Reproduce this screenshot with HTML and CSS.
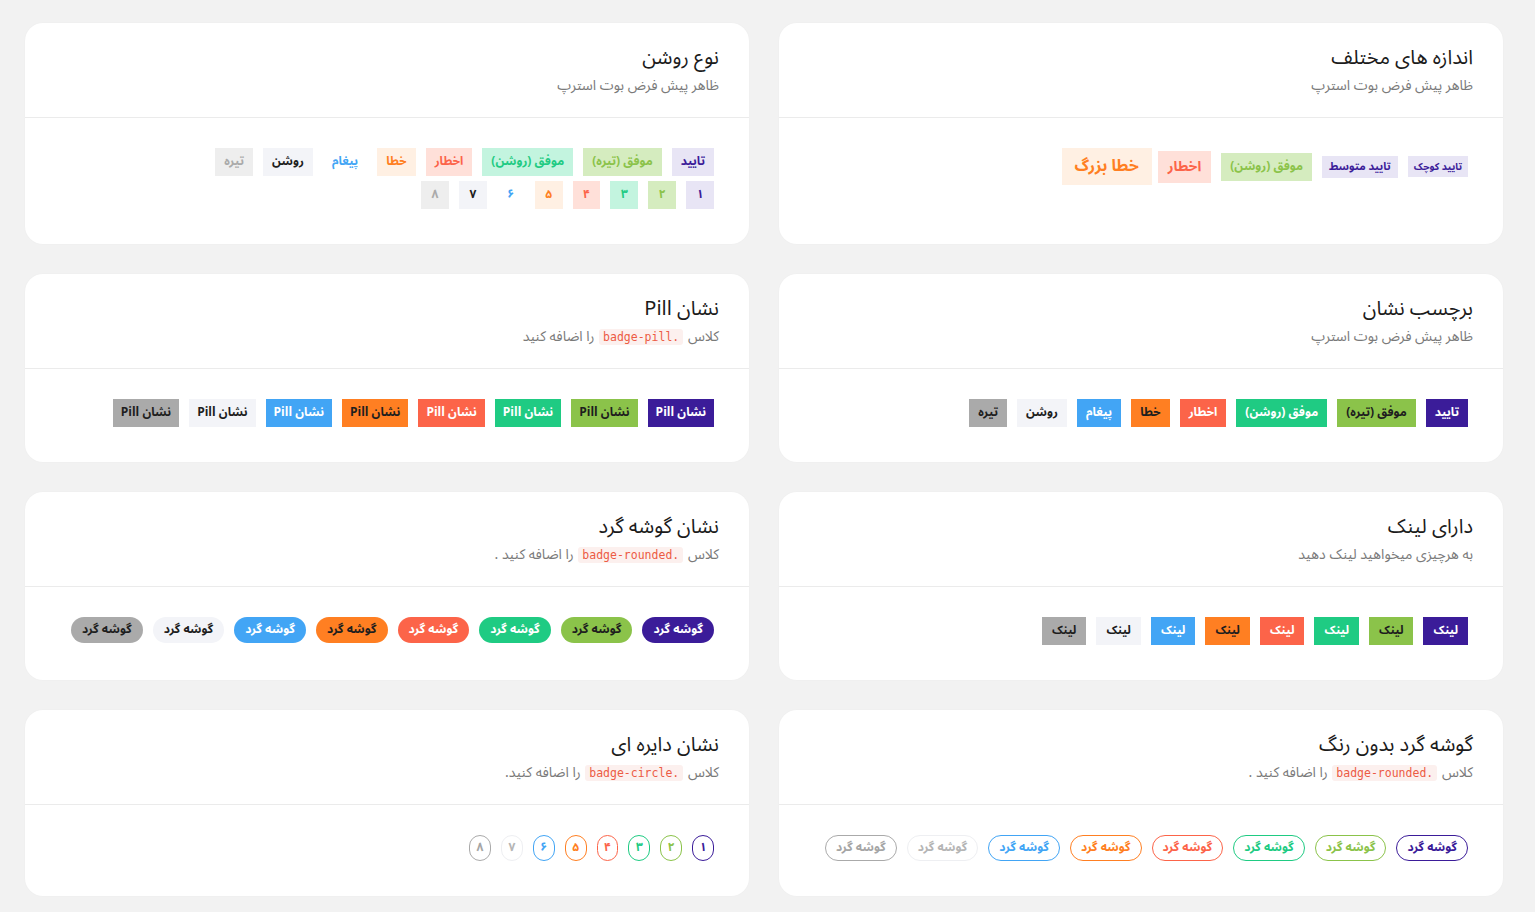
FILE: index.html
```html
<!DOCTYPE html>
<html lang="fa" dir="rtl">
<head>
<meta charset="utf-8">
<title>نشان ها</title>
<link rel="stylesheet" href="styles.css">
</head>
<body>
<main class="page">

  <section class="card">
    <header class="card-head">
      <h4 class="card-title">اندازه های مختلف</h4>
      <p class="card-sub">ظاهر پیش فرض بوت استرپ</p>
    </header>
    <div class="card-body">
      <div class="badge-row align-center">
        <span class="badge badge-sm light-primary">تایید کوچک</span>
        <span class="badge badge-md light-primary">تایید متوسط</span>
        <span class="badge light-success-dark">موفق (روشن)</span>
        <span class="badge badge-lg light-danger">اخطار</span>
        <span class="badge badge-xl light-warning">خطا بزرگ</span>
      </div>
    </div>
  </section>

  <section class="card">
    <header class="card-head">
      <h4 class="card-title">نوع روشن</h4>
      <p class="card-sub">ظاهر پیش فرض بوت استرپ</p>
    </header>
    <div class="card-body">
      <div class="badge-row">
        <span class="badge light-primary">تایید</span>
        <span class="badge light-success-dark">موفق (تیره)</span>
        <span class="badge light-success">موفق (روشن)</span>
        <span class="badge light-danger">اخطار</span>
        <span class="badge light-warning">خطا</span>
        <span class="badge light-info">پیغام</span>
        <span class="badge light-light">روشن</span>
        <span class="badge light-dark">تیره</span>
      </div>
      <div class="badge-row">
        <span class="badge badge-num light-primary">۱</span>
        <span class="badge badge-num light-success-dark">۲</span>
        <span class="badge badge-num light-success">۳</span>
        <span class="badge badge-num light-danger">۴</span>
        <span class="badge badge-num light-warning">۵</span>
        <span class="badge badge-num light-info">۶</span>
        <span class="badge badge-num light-light">۷</span>
        <span class="badge badge-num light-dark">۸</span>
      </div>
    </div>
  </section>

  <section class="card">
    <header class="card-head">
      <h4 class="card-title">برچسب نشان</h4>
      <p class="card-sub">ظاهر پیش فرض بوت استرپ</p>
    </header>
    <div class="card-body">
      <div class="badge-row">
        <span class="badge bg-primary">تایید</span>
        <span class="badge bg-success-dark">موفق (تیره)</span>
        <span class="badge bg-success">موفق (روشن)</span>
        <span class="badge bg-danger">اخطار</span>
        <span class="badge bg-warning">خطا</span>
        <span class="badge bg-info">پیغام</span>
        <span class="badge bg-light">روشن</span>
        <span class="badge bg-dark">تیره</span>
      </div>
    </div>
  </section>

  <section class="card">
    <header class="card-head">
      <h4 class="card-title">نشان Pill</h4>
      <p class="card-sub">کلاس <code class="code">.badge-pill</code> را اضافه کنید</p>
    </header>
    <div class="card-body">
      <div class="badge-row">
        <span class="badge badge-pill bg-primary">نشان Pill</span>
        <span class="badge badge-pill bg-success-dark">نشان Pill</span>
        <span class="badge badge-pill bg-success">نشان Pill</span>
        <span class="badge badge-pill bg-danger">نشان Pill</span>
        <span class="badge badge-pill bg-warning">نشان Pill</span>
        <span class="badge badge-pill bg-info">نشان Pill</span>
        <span class="badge badge-pill bg-light">نشان Pill</span>
        <span class="badge badge-pill bg-dark">نشان Pill</span>
      </div>
    </div>
  </section>

  <section class="card">
    <header class="card-head">
      <h4 class="card-title">دارای لینک</h4>
      <p class="card-sub">به هرچیزی میخواهید لینک دهید</p>
    </header>
    <div class="card-body">
      <div class="badge-row">
        <a class="badge badge-link bg-primary" href="#">لینک</a>
        <a class="badge badge-link bg-success-dark" href="#">لینک</a>
        <a class="badge badge-link bg-success" href="#">لینک</a>
        <a class="badge badge-link bg-danger" href="#">لینک</a>
        <a class="badge badge-link bg-warning" href="#">لینک</a>
        <a class="badge badge-link bg-info" href="#">لینک</a>
        <a class="badge badge-link bg-light" href="#">لینک</a>
        <a class="badge badge-link bg-dark" href="#">لینک</a>
      </div>
    </div>
  </section>

  <section class="card">
    <header class="card-head">
      <h4 class="card-title">نشان گوشه گرد</h4>
      <p class="card-sub">کلاس <code class="code">.badge-rounded</code> را اضافه کنید .</p>
    </header>
    <div class="card-body">
      <div class="badge-row">
        <span class="badge badge-rounded bg-primary">گوشه گرد</span>
        <span class="badge badge-rounded bg-success-dark">گوشه گرد</span>
        <span class="badge badge-rounded bg-success">گوشه گرد</span>
        <span class="badge badge-rounded bg-danger">گوشه گرد</span>
        <span class="badge badge-rounded bg-warning">گوشه گرد</span>
        <span class="badge badge-rounded bg-info">گوشه گرد</span>
        <span class="badge badge-rounded bg-light">گوشه گرد</span>
        <span class="badge badge-rounded bg-dark">گوشه گرد</span>
      </div>
    </div>
  </section>

  <section class="card">
    <header class="card-head">
      <h4 class="card-title">گوشه گرد بدون رنگ</h4>
      <p class="card-sub">کلاس <code class="code">.badge-rounded</code> را اضافه کنید .</p>
    </header>
    <div class="card-body">
      <div class="badge-row">
        <span class="badge badge-outline out-primary">گوشه گرد</span>
        <span class="badge badge-outline out-success-dark">گوشه گرد</span>
        <span class="badge badge-outline out-success">گوشه گرد</span>
        <span class="badge badge-outline out-danger">گوشه گرد</span>
        <span class="badge badge-outline out-warning">گوشه گرد</span>
        <span class="badge badge-outline out-info">گوشه گرد</span>
        <span class="badge badge-outline out-light">گوشه گرد</span>
        <span class="badge badge-outline out-dark">گوشه گرد</span>
      </div>
    </div>
  </section>

  <section class="card">
    <header class="card-head">
      <h4 class="card-title">نشان دایره ای</h4>
      <p class="card-sub">کلاس <code class="code">.badge-circle</code> را اضافه کنید.</p>
    </header>
    <div class="card-body">
      <div class="badge-row">
        <span class="badge badge-circle out-primary">۱</span>
        <span class="badge badge-circle out-success-dark">۲</span>
        <span class="badge badge-circle out-success">۳</span>
        <span class="badge badge-circle out-danger">۴</span>
        <span class="badge badge-circle out-warning">۵</span>
        <span class="badge badge-circle out-info">۶</span>
        <span class="badge badge-circle out-light">۷</span>
        <span class="badge badge-circle out-dark">۸</span>
      </div>
    </div>
  </section>

</main>
</body>
</html>
```

FILE: styles.css
```css
* { box-sizing: border-box; }

html, body {
  margin: 0;
  padding: 0;
  background: #f2f2f2;
}

body {
  direction: rtl;
  font-family: "Noto Sans Arabic", Roboto, "DejaVu Sans", sans-serif;
  color: #222;
}

.page {
  display: grid;
  grid-template-columns: 724px 724px;
  column-gap: 30px;
  row-gap: 30px;
  padding: 23px 32px 8px 25px;
}

.card {
  background: #fff;
  border-radius: 18px;
  box-shadow: 0 0 2px rgba(0, 0, 0, 0.03);
  display: flex;
  flex-direction: column;
}

.card-head {
  padding: 23px 30px 21px;
  border-bottom: 1px solid #ebebeb;
}

.card-title {
  margin: 0;
  font-size: 20px;
  line-height: 24px;
  font-weight: 400;
  color: #1b1b1b;
}

.card-sub {
  margin: 6px 0 0;
  font-size: 14px;
  line-height: 20px;
  color: #7a7a7a;
}

.code {
  font-family: "DejaVu Sans Mono", "Liberation Mono", monospace;
  font-size: 11.5px;
  line-height: 14px;
  color: #ec5b44;
  background: #fcf0ee;
  padding: 1px 4px;
  margin: 0 1px;
  border-radius: 3px;
}

.card-body {
  padding: 30px 35px 35px 30px;
  flex: 1;
}

.badge-row {
  display: flex;
  flex-wrap: wrap;
  gap: 10px;
}

.badge-row + .badge-row { margin-top: 5px; }

.align-center { align-items: center; }

.badge {
  display: inline-flex;
  align-items: center;
  justify-content: center;
  padding: 7px 9px;
  font-size: 12px;
  line-height: 14px;
  height: 28px;
  font-weight: 700;
  text-decoration: none;
  white-space: nowrap;
}

.badge-num { padding: 7px 10.5px; }
.badge-pill { padding: 7px 8px; }
.badge-link { padding: 7px 10px; }

.badge-sm { font-size: 10px; line-height: 13px; padding: 4px 6px; height: 21px; }
.badge-md { font-size: 11px; line-height: 14px; padding: 4px 7px; height: 22px; }
.badge-lg { font-size: 14px; line-height: 16px; padding: 8px 10px; height: 32px; }
.badge-xl { font-size: 16px; line-height: 19px; padding: 9px 13px; height: 37px; margin-right: -4px; }

.badge-rounded { border-radius: 13px; padding: 6px 11px; height: 26px; }

.badge-outline {
  border: 1px solid currentColor;
  border-radius: 13px;
  padding: 5px 10px;
  height: 26px;
  background: transparent;
}

.badge-circle {
  border: 1px solid currentColor;
  border-radius: 999px;
  padding: 5px 6.5px;
  height: 26px;
  min-width: 19px;
  background: transparent;
}

/* solid */
.bg-primary { background: #3b1c99; color: #fff; }
.bg-success-dark { background: #8bc34a; color: #1e1e1e; }
.bg-success { background: #1fcb83; color: #fff; }
.bg-danger { background: #fc6449; color: #fff; }
.bg-warning { background: #ff7f22; color: #1e1e1e; }
.bg-info { background: #42a5f5; color: #fff; }
.bg-light { background: #f3f4f8; color: #1e1e1e; }
.bg-dark { background: #aaaaaa; color: #1e1e1e; }

/* light */
.light-primary { background: #e8e5f5; color: #3b1c99; }
.light-success-dark { background: #d5ecbf; color: #8bc34a; }
.light-success { background: #c3f4df; color: #1fcb83; }
.light-danger { background: #ffe0d9; color: #fc6449; }
.light-warning { background: #fff0e3; color: #ff7f22; }
.light-info { background: #ffffff; color: #42a5f5; }
.light-light { background: #f3f4f8; color: #1e1e1e; }
.light-dark { background: #eeeeee; color: #aaaaaa; }

/* outline */
.out-primary { color: #3b1c99; }
.out-success-dark { color: #8bc34a; }
.out-success { color: #1fcb83; }
.out-danger { color: #fc6449; }
.out-warning { color: #ff7f22; }
.out-info { color: #42a5f5; }
.out-light { color: #b5b5b5; border-color: #eeeff2; }
.out-dark { color: #a5a5a5; border-color: #aaaaaa; }
```
